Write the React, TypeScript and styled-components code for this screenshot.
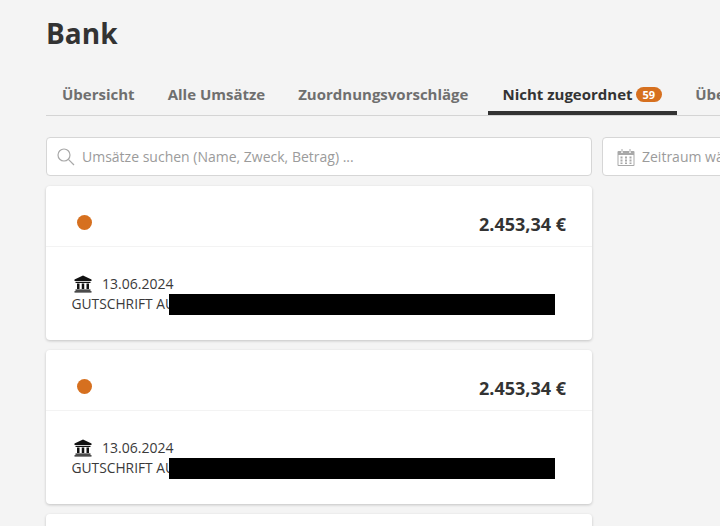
import { FunctionComponent } from 'react'
import styled, { createGlobalStyle } from 'styled-components'

const GlobalStyle = createGlobalStyle`
  html, body {
    margin: 0;
    height: 100%;
    overflow: hidden;
    background: #f4f4f4;
    font-family: "Open Sans", "Liberation Sans", sans-serif;
    color: #333;
  }
`

const Page = styled.div`
  width: 720px;
  height: 526px;
  overflow: hidden;
  padding: 12px 0 0 46px;
  box-sizing: border-box;
`

const Title = styled.h1`
  margin: 0 0 19px;
  font-size: 28px;
  line-height: 42px;
  font-weight: 700;
  color: #333;
`

const Tabs = styled.div`
  display: flex;
  width: 720px;
  height: 42px;
  border-bottom: 1px solid #d4d4d4;
  box-sizing: content-box;
  white-space: nowrap;
`

const Tab = styled.div<{ $active?: boolean }>`
  flex: none;
  display: flex;
  align-items: center;
  gap: 3px;
  height: 42px;
  padding: 4px 15px 0 ${(props) => (props.$active ? 14 : 16)}px;
  margin-left: ${(props) => (props.$active ? 3 : 0)}px;
  margin-right: 2px;
  margin-bottom: -1px;
  box-sizing: border-box;
  font-size: 15px;
  font-weight: 700;
  color: ${(props) => (props.$active ? '#333' : '#6f6f6f')};
  border-bottom: 4px solid ${(props) => (props.$active ? '#333' : 'transparent')};
`

const Badge = styled.span`
  display: inline-block;
  padding: 0 7px;
  height: 15px;
  line-height: 15px;
  border-radius: 8px;
  background: #d6701f;
  color: #fff;
  font-size: 11px;
  font-weight: 700;
`

const Filters = styled.div`
  display: flex;
  gap: 10px;
  margin-top: 21px;
  width: 760px;
`

const Field = styled.div<{ $width: number; $inset: number }>`
  flex: none;
  display: flex;
  align-items: center;
  gap: 7px;
  width: ${(props) => props.$width}px;
  height: 39px;
  padding-left: ${(props) => props.$inset}px;
  box-sizing: border-box;
  background: #fff;
  border: 1px solid #d6d6d6;
  border-radius: 4px;
  font-size: 14px;
  color: #9b9b9b;
  white-space: nowrap;
  overflow: hidden;
`

const CardList = styled.div`
  display: flex;
  flex-direction: column;
  gap: 10px;
  width: 546px;
  margin-top: 10px;
`

const Card = styled.div`
  flex: none;
  height: 154px;
  background: #fff;
  border-radius: 4px;
  box-shadow: 0 1px 3px rgba(0, 0, 0, 0.2);
`

const CardHeader = styled.div`
  display: flex;
  align-items: center;
  justify-content: space-between;
  height: 61px;
  padding: 16px 26px 0 31px;
  box-sizing: border-box;
  border-bottom: 1px solid #f3f3f3;
`

const Dot = styled.span`
  width: 15px;
  height: 15px;
  margin-top: -4px;
  border-radius: 50%;
  background: #d6701f;
`

const Amount = styled.div`
  font-size: 18px;
  font-weight: 700;
  color: #333;
`

const CardBody = styled.div`
  position: relative;
  padding: 27px 26px 0 26px;
  font-size: 14px;
  line-height: 20px;
  color: #3a3a3a;
`

const DateRow = styled.div`
  display: flex;
  align-items: center;
  gap: 10px;
  padding-left: 2px;
`

const Purpose = styled.div`
  margin-left: -0.5px;
  font-size: 13.8px;
  white-space: nowrap;
  overflow: hidden;
`

const Redaction = styled.div`
  position: absolute;
  left: 123px;
  top: 47px;
  width: 386px;
  height: 21px;
  background: #000;
`

const SearchIcon = () => (
  <svg width="18" height="18" viewBox="0 0 18 18" fill="none" stroke="#a8a8a8" strokeWidth="1.2">
    <circle cx="7" cy="7" r="6" />
    <path d="M11.400 11.400 17 17" />
  </svg>
)

const CalendarIcon = () => (
  <svg width="18" height="18" viewBox="0 0 17 18" fill="#a8a8a8">
    <path d="M1 3h2.500v2h2V3h6v2h2V3H16a1 1 0 0 1 1 1v13a1 1 0 0 1-1 1H1a1 1 0 0 1-1-1V4a1 1 0 0 1 1-1Zm0 4v10h15V7H1Z" />
    <rect x="4" y="1" width="1" height="3.500" />
    <rect x="12" y="1" width="1" height="3.500" />
    <path d="M3 8.500h2v2H3zM7.500 8.500h2v2h-2zM12 8.500h2v2h-2zM3 11.500h2v2H3zM7.500 11.500h2v2h-2zM12 11.500h2v2h-2zM3 14.500h2v1.500H3zM7.500 14.500h2v1.500h-2zM12 14.500h2v1.500h-2z" />
  </svg>
)

const BankIcon = () => (
  <svg width="18" height="18" viewBox="0 0 18 18" fill="#111">
    <path d="M9 0.500 17.500 4.500V6H0.500V4.500Z" />
    <path d="M1.500 6.800h15V8h-15z" />
    <path d="M3 8.500h2.500v5.500H3zM7.750 8.500h2.500v5.500h-2.500zM12.500 8.500H15v5.500h-2.500z" />
    <path d="M1.500 14.500h15v1.200h-15zM0.500 16.200h17v1.300H0.500z" />
  </svg>
)

const TransactionCard: FunctionComponent = () => (
  <Card>
    <CardHeader>
      <Dot />
      <Amount>2.453,34 €</Amount>
    </CardHeader>
    <CardBody>
      <DateRow>
        <BankIcon />
        13.06.2024
      </DateRow>
      <Purpose>GUTSCHRIFT AUS</Purpose>
      <Redaction />
    </CardBody>
  </Card>
)

const App: FunctionComponent = () => (
  <Page>
    <GlobalStyle />
    <Title>Bank</Title>
    <Tabs>
      <Tab>Übersicht</Tab>
      <Tab>Alle Umsätze</Tab>
      <Tab>Zuordnungsvorschläge</Tab>
      <Tab $active>
        Nicht zugeordnet <Badge>59</Badge>
      </Tab>
      <Tab>Überfällig</Tab>
    </Tabs>
    <Filters>
      <Field $width={546} $inset={10}>
        <SearchIcon />
        Umsätze suchen (Name, Zweck, Betrag) ...
      </Field>
      <Field $width={200} $inset={14}>
        <CalendarIcon />
        Zeitraum wählen
      </Field>
    </Filters>
    <CardList>
      <TransactionCard />
      <TransactionCard />
      <TransactionCard />
    </CardList>
  </Page>
)

export default App
